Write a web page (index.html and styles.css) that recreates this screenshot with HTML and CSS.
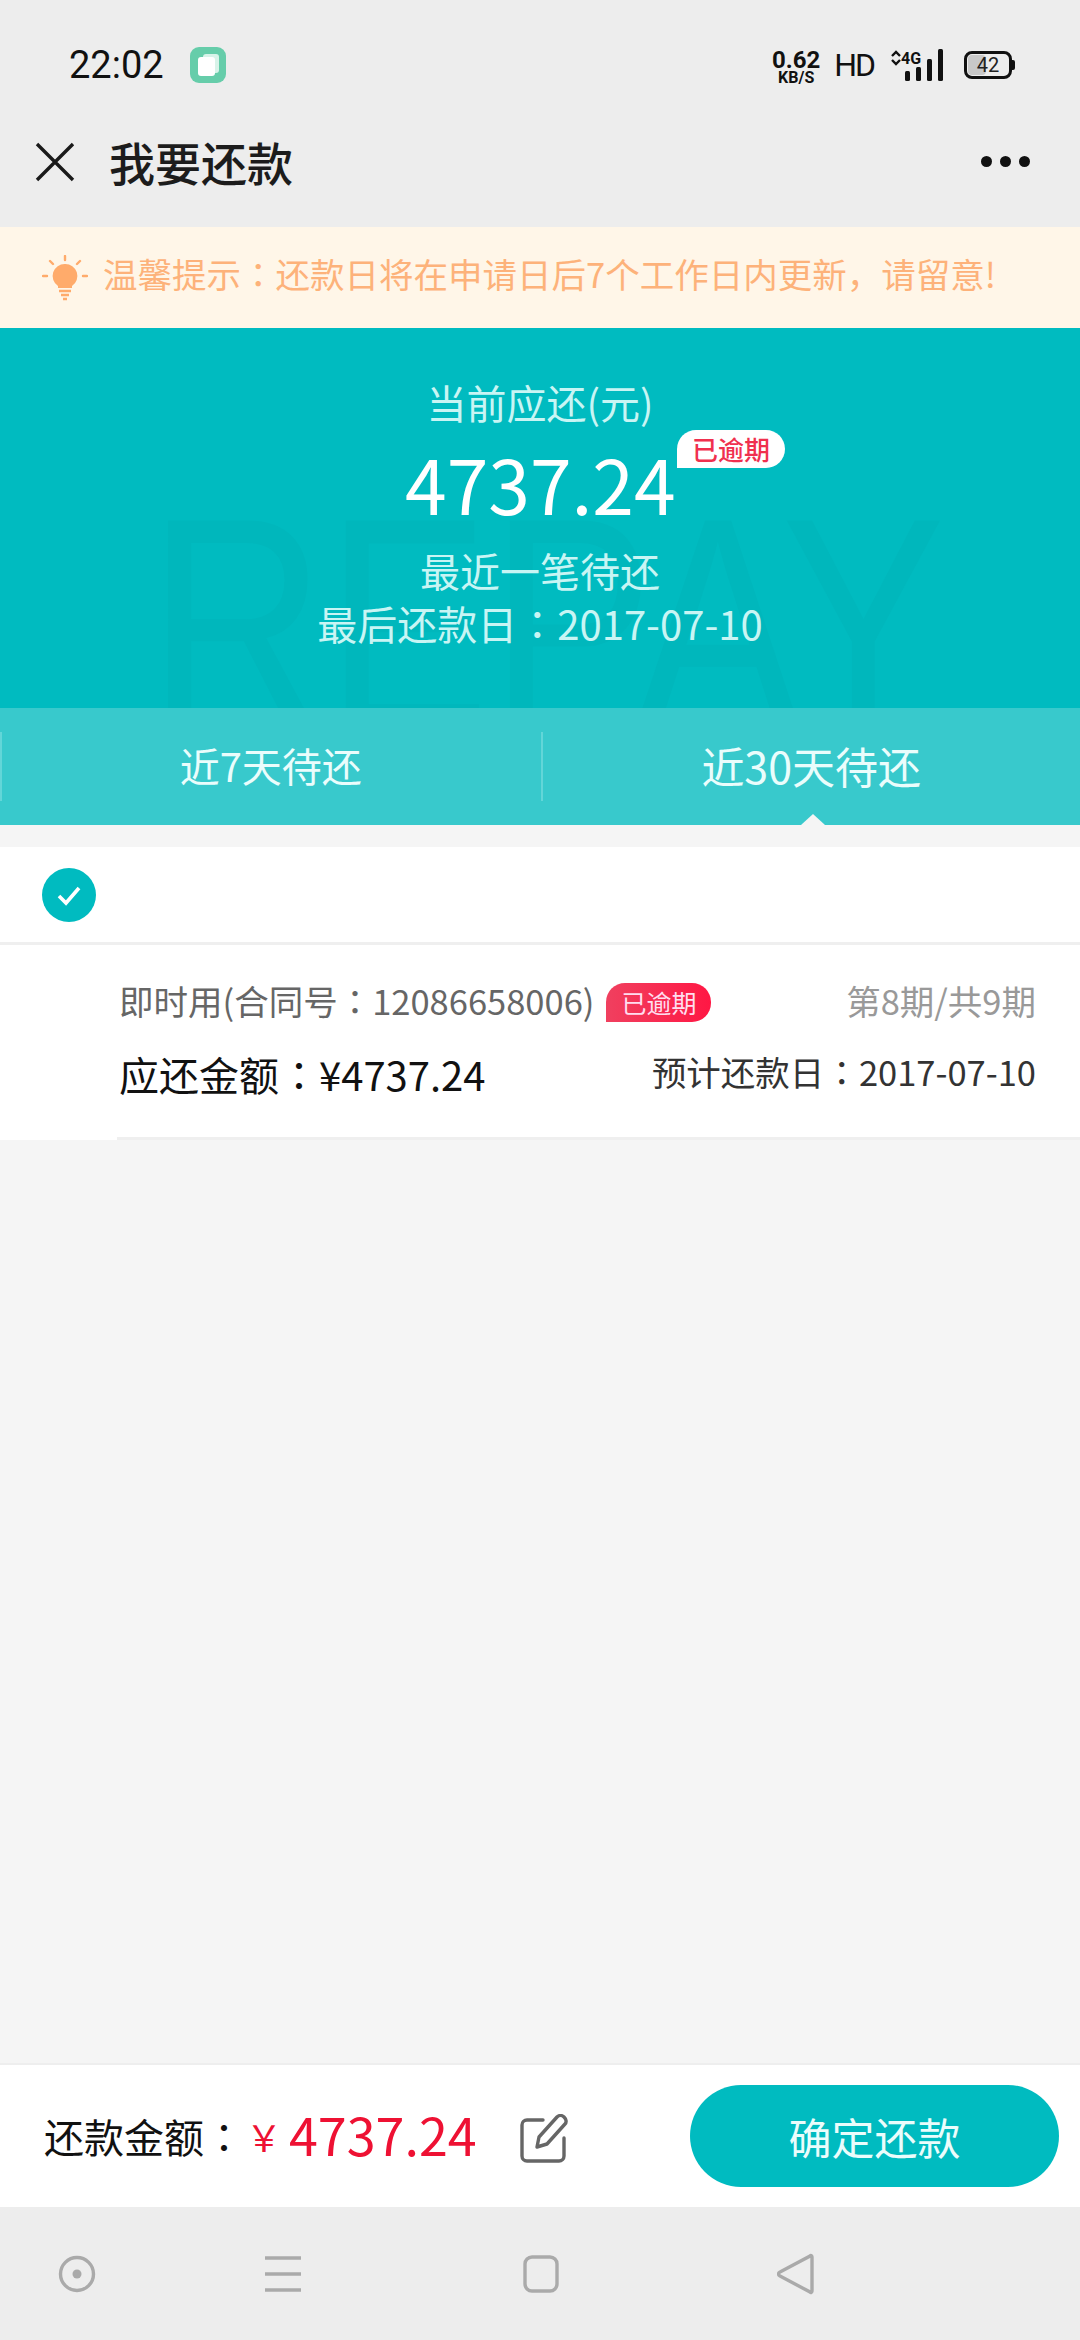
FILE: index.html
```html
<!DOCTYPE html>
<html lang="zh-CN">
<head>
    <meta charset="UTF-8">
    <title>我要还款</title>
    <link rel="stylesheet" href="styles.css">
</head>
<body>
    <div class="page">
        <div class="statusbar">
            <div class="status-left">
                <span class="time">22:02</span>
                <svg class="app-icon" width="36" height="36" viewBox="0 0 36 36">
                    <rect width="36" height="36" rx="9" fill="#66cdaa"/>
                    <rect x="13" y="7" width="16" height="19" rx="3" fill="#d8f3e9"/>
                    <rect x="8" y="10" width="17" height="19" rx="3" fill="#fff"/>
                </svg>
            </div>
            <div class="status-right">
                <div class="speed"><span class="speed-num">0.62</span><span class="speed-unit">KB/S</span></div>
                <span class="hd">HD</span>
                <svg class="signal" width="58" height="34" viewBox="0 0 58 34">
                    <path d="M5 8l4-4 4 4M5 12l4 4 4-4" fill="none" stroke="#111" stroke-width="2.4"/>
                    <text x="14" y="16" class="signal-text">4G</text>
                    <rect x="18" y="23" width="5" height="10" rx="1.5" fill="#111"/>
                    <rect x="29" y="19" width="5" height="14" rx="1.5" fill="#111"/>
                    <rect x="40" y="11" width="5" height="22" rx="1.5" fill="#111"/>
                    <rect x="51" y="1" width="5" height="32" rx="1.5" fill="#111"/>
                </svg>
                <div class="battery"><span class="battery-fill"></span><span class="battery-num">42</span></div>
            </div>
        </div>

        <div class="navbar">
            <svg class="close-icon" width="40" height="40" viewBox="0 0 40 40">
                <path d="M2 2l36 36M38 2L2 38" stroke="#1a1a1a" stroke-width="3.4" fill="none"/>
            </svg>
            <h1 class="title">我要还款</h1>
            <div class="more"><i></i><i></i><i></i></div>
        </div>

        <div class="tip">
            <svg class="tip-icon" width="46" height="46" viewBox="0 0 46 46">
                <g stroke="#ffab6b" stroke-width="2.4" stroke-linecap="round">
                    <path d="M23 1v4M8 6l3 3M38 6l-3 3M1 21h4M41 21h4"/>
                </g>
                <path d="M23 9a12 12 0 0 1 7 22v2H16v-2a12 12 0 0 1 7-22z" fill="#ffab6b"/>
                <path d="M17 36h12M19 40h8M21 44h4" stroke="#ffab6b" stroke-width="2.4"/>
            </svg>
            <span class="tip-text">温馨提示<span class="colon">：</span>还款日将在申请日后7个工作日内更新，请留意!</span>
        </div>

        <div class="hero">
            <div class="watermark">REPAY</div>
            <div class="hero-label">当前应还(元)</div>
            <div class="hero-amount">4737.24<span class="hero-badge">已逾期</span></div>
            <div class="hero-line first">最近一笔待还</div>
            <div class="hero-line">最后还款日<span class="colon">：</span>2017-07-10</div>
        </div>

        <div class="tabs">
            <div class="tab small">近7天待还</div>
            <div class="tab active">近30天待还</div>
        </div>

        <div class="content">
            <div class="check-row">
                <svg width="54" height="54" viewBox="0 0 54 54">
                    <circle cx="27" cy="27" r="27" fill="#00bbc0"/>
                    <path d="M17 28l7 7 13-15" fill="none" stroke="#fff" stroke-width="3.6"/>
                </svg>
            </div>
            <div class="item">
                <div class="item-inner">
                    <div class="item-row">
                        <div class="item-name">即时用(合同号<span class="colon">：</span>12086658006)<span class="badge">已逾期</span></div>
                        <div class="item-period">第8期/共9期</div>
                    </div>
                    <div class="item-row second">
                        <div class="item-due">应还金额<span class="colon">：</span>¥4737.24</div>
                        <div class="item-date">预计还款日<span class="colon">：</span>2017-07-10</div>
                    </div>
                </div>
            </div>
        </div>

        <div class="footer">
            <span class="footer-label">还款金额<span class="colon">：</span></span>
            <span class="footer-yen">￥</span>
            <span class="footer-amount">4737.24</span>
            <svg class="edit-icon" width="50" height="50" viewBox="0 0 50 50">
                <path d="M24 6H8a5 5 0 0 0-5 5v31a5 5 0 0 0 5 5h32a5 5 0 0 0 5-5V24" fill="none" stroke="#666" stroke-width="3.4" stroke-linecap="round"/>
                <path d="M18 33l2-10L38 3c2-2 5-2 7 0s3 5 1 7L28 30z" fill="none" stroke="#666" stroke-width="3.4" stroke-linejoin="round"/>
            </svg>
            <button class="confirm">确定还款</button>
        </div>

        <div class="sysbar">
            <svg width="38" height="38" viewBox="0 0 38 38"><circle cx="19" cy="19" r="16.5" fill="none" stroke="#aaa" stroke-width="3.4"/><circle cx="19" cy="19" r="4.5" fill="#aaa"/></svg>
            <svg class="sys-menu" width="38" height="38" viewBox="0 0 38 38"><path d="M1 3h36M1 19h36M1 35h36" stroke="#aaa" stroke-width="3.4"/></svg>
            <svg class="sys-home" width="38" height="38" viewBox="0 0 38 38"><rect x="3" y="2" width="32" height="34" rx="7" fill="none" stroke="#aaa" stroke-width="3.4"/></svg>
            <svg class="sys-back" width="38" height="42" viewBox="0 0 38 42"><path d="M33 3c1-1 2 0 2 1v34c0 1-1 2-2 1L3 23c-2-1-2-3 0-4z" fill="none" stroke="#aaa" stroke-width="3.4"/></svg>
        </div>
    </div>
</body>
</html>
```

FILE: styles.css
```css
* {
    box-sizing: border-box;
}
body {
    margin: 0;
    font-family: "Noto Sans CJK SC", "Noto Sans", sans-serif;
    background-color: #f5f5f5;
}
.page {
    width: 1080px;
    height: 2340px;
    display: flex;
    flex-direction: column;
    overflow: hidden;
}
/* the original font centres the full-width colon */
.colon {
    font-family: "Noto Sans CJK TC", sans-serif;
    font-feature-settings: "locl" 0;
}

/* status bar */
.statusbar {
    height: 100px;
    padding: 30px 68px 0 69px;
    background-color: #ededed;
    display: flex;
    justify-content: space-between;
    align-items: center;
}
.status-left {
    display: flex;
    align-items: center;
    gap: 26px;
}
.time {
    font-family: Roboto, sans-serif;
    font-size: 38px;
    color: #111;
}
.status-right {
    display: flex;
    align-items: center;
}
.speed {
    display: flex;
    flex-direction: column;
    align-items: center;
    width: 50px;
    padding-top: 5px;
    font-family: Roboto, sans-serif;
    font-weight: 700;
    color: #111;
}
.speed-num {
    font-size: 24px;
    line-height: 20px;
}
.speed-unit {
    font-size: 16px;
    line-height: 16px;
}
.hd {
    margin-left: 13px;
    font-family: Roboto, sans-serif;
    font-size: 32px;
    letter-spacing: -2px;
    color: #111;
}
.signal {
    margin-left: 13px;
}
.signal-text {
    font-family: Roboto, sans-serif;
    font-size: 16px;
    font-weight: 700;
    fill: #111;
}
.battery {
    position: relative;
    margin-left: 19px;
    width: 48px;
    height: 28px;
    border: 3px solid #111;
    border-radius: 8px;
    display: flex;
    align-items: center;
    justify-content: center;
}
.battery::after {
    content: "";
    position: absolute;
    right: -6px;
    top: 6px;
    width: 3px;
    height: 10px;
    background-color: #111;
    border-radius: 0 2px 2px 0;
}
.battery-fill {
    position: absolute;
    left: 1px;
    top: 1px;
    bottom: 1px;
    width: 42%;
    background-color: #c8c8c8;
    border-radius: 4px;
}
.battery-num {
    position: relative;
    font-family: Roboto, sans-serif;
    font-size: 20px;
    color: #222;
}

/* nav */
.navbar {
    height: 127px;
    padding: 0 50px 0 35px;
    background-color: #ededed;
    display: flex;
    align-items: center;
}
.close-icon {
    margin-top: -4px;
}
.title {
    margin: -6px 0 0 34px;
    flex: 1;
    font-size: 46px;
    font-weight: 500;
    color: #1c1c1c;
}
.more {
    display: flex;
    gap: 8px;
    margin-top: -4px;
}
.more i {
    display: block;
    width: 11px;
    height: 11px;
    border-radius: 50%;
    background-color: #111;
}

/* tip */
.tip {
    height: 101px;
    padding-left: 42px;
    background-color: #fff6e8;
    color: #fdb27a;
    font-size: 34.5px;
    display: flex;
    align-items: center;
    gap: 15px;
    white-space: nowrap;
}
.tip-icon {
    flex: none;
}
.tip-text {
    margin-top: -10px;
}

/* hero */
.hero {
    position: relative;
    height: 380px;
    padding-top: 46px;
    background-color: #00bbc0;
    color: #c8f5f4;
    text-align: center;
    overflow: hidden;
}
.watermark {
    position: absolute;
    left: 148px;
    top: 130px;
    font-family: "Liberation Sans", sans-serif;
    font-size: 300px;
    line-height: 330px;
    color: #00b7bc;
    white-space: nowrap;
    transform: scaleX(0.82);
    transform-origin: left top;
}
.hero-label,
.hero-line,
.hero-amount {
    position: relative;
}
.hero-label {
    font-size: 40px;
    line-height: 56px;
}
.hero-amount {
    width: 270px;
    margin: 0 auto;
    height: 112px;
    font-size: 75px;
    line-height: 106px;
    color: #fff;
    white-space: nowrap;
}
.hero-badge {
    position: absolute;
    left: 272px;
    top: 0;
    width: 108px;
    height: 38px;
    border-radius: 19px 19px 19px 0;
    background-color: #fff;
    color: #f0304e;
    font-size: 26px;
    font-weight: 500;
    line-height: 38px;
    text-align: center;
}
.hero-line {
    font-size: 40px;
    line-height: 53px;
}
.hero-line.first {
    margin-top: 2px;
}

/* tabs */
.tabs {
    height: 117px;
    padding-top: 24px;
    background-color: #38c9cc;
    display: flex;
    color: #eafdfc;
}
.tab {
    position: relative;
    width: 540px;
    height: 69px;
    padding-bottom: 3px;
    border-left: 2px solid #62d6d8;
    display: flex;
    align-items: center;
    justify-content: center;
    font-size: 43px;
}
.tab.small {
    font-size: 40px;
}
.tab.active {
    width: 540px;
    margin-left: 1px;
}
.tab.active::after {
    content: "";
    position: absolute;
    left: 258px;
    bottom: -24px;
    border-left: 12px solid transparent;
    border-right: 12px solid transparent;
    border-bottom: 11px solid #f5f5f5;
}

/* list */
.content {
    flex: 1;
    padding-top: 22px;
    background-color: #f5f5f5;
}
.check-row {
    height: 98px;
    padding-left: 42px;
    background-color: #fff;
    border-bottom: 3px solid #efefef;
    display: flex;
    align-items: center;
}
.item {
    height: 195px;
    padding-left: 117px;
    background-color: #fff;
}
.item-inner {
    height: 100%;
    padding: 32px 44px 0 2px;
    border-bottom: 3px solid #efefef;
}
.item-row {
    display: flex;
    justify-content: space-between;
    align-items: center;
}
.item-row.second {
    margin-top: 23px;
}
.item-name {
    font-size: 34.5px;
    line-height: 46px;
    color: #666;
    white-space: nowrap;
}
.badge {
    display: inline-block;
    margin-left: 12px;
    width: 105px;
    height: 39px;
    border-radius: 19px 19px 19px 0;
    background: linear-gradient(90deg, #f0405f, #ff1744);
    color: #fde;
    font-size: 25px;
    line-height: 38px;
    text-align: center;
    vertical-align: 2px;
}
.item-period {
    font-size: 34.5px;
    line-height: 46px;
    color: #999;
    white-space: nowrap;
}
.item-due {
    font-size: 40px;
    line-height: 56px;
    color: #111;
    white-space: nowrap;
}
.item-date {
    margin-top: -6px;
    font-size: 34.5px;
    line-height: 56px;
    color: #333;
    white-space: nowrap;
}

/* footer */
.footer {
    height: 144px;
    padding: 0 21px 0 44px;
    border-top: 2px solid #eeeeee;
    background-color: #fff;
    display: flex;
    align-items: center;
    white-space: nowrap;
}
.footer-label {
    font-size: 40px;
    color: #111;
}
.footer-yen {
    margin-left: 2px;
    width: 36px;
    font-size: 36px;
    color: #ee1133;
}
.footer-amount {
    margin-left: 7px;
    margin-top: -6px;
    font-size: 52px;
    color: #ee1133;
}
.edit-icon {
    margin-left: 42px;
    margin-top: 6px;
}
.confirm {
    margin-left: auto;
    width: 369px;
    height: 102px;
    border: none;
    border-radius: 51px;
    background-color: #00bbc0;
    color: #eafdfc;
    font-family: inherit;
    font-size: 43px;
}

/* system nav */
.sysbar {
    height: 133px;
    padding: 0 0 0 58px;
    background-color: #ededed;
    display: flex;
    align-items: center;
}
.sys-menu {
    margin-left: 168px;
}
.sys-home {
    margin-left: 220px;
}
.sys-back {
    margin-left: 217px;
}
```
